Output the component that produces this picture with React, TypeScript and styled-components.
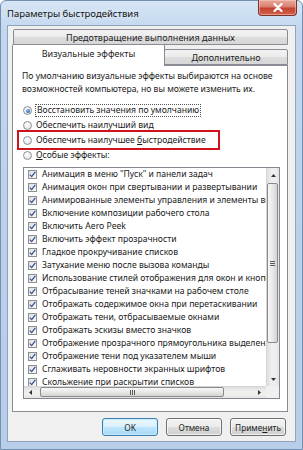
import React from "react";
import styled, { createGlobalStyle, css } from "styled-components";

const GlobalStyle = createGlobalStyle`
  html, body {
    margin: 0;
    padding: 0;
  }
  body {
    width: 303px;
    height: 450px;
    overflow: hidden;
    background: #ffffff;
    font-family: "Noto Sans", "Open Sans", sans-serif;
    font-size: 8.6px;
    color: #1a1a1a;
  }
`;

const EFFECTS = [
  "Анимация в меню \"Пуск\" и панели задач",
  "Анимация окон при свертывании и развертывании",
  "Анимированные элементы управления и элементы внутри окна",
  "Включение композиции рабочего стола",
  "Включить Aero Peek",
  "Включить эффект прозрачности",
  "Гладкое прокручивание списков",
  "Затухание меню после вызова команды",
  "Использование стилей отображения для окон и кнопок",
  "Отбрасывание теней значками на рабочем столе",
  "Отображать содержимое окна при перетаскивании",
  "Отображать тени, отбрасываемые окнами",
  "Отображать эскизы вместо значков",
  "Отображение прозрачного прямоугольника выделения",
  "Отображение тени под указателем мыши",
  "Сглаживать неровности экранных шрифтов",
  "Скольжение при раскрытии списков",
];

export default function App() {
  return (
    <>
      <GlobalStyle />
      <Window>
        <TitleBar>
          <Title>Параметры быстродействия</Title>
          <CloseButton>
            <svg width="10" height="9" viewBox="0 0 10 9">
              <path
                d="M1.5 1 L8.5 8 M8.5 1 L1.5 8"
                stroke="#ffffff"
                strokeWidth="2.2"
                strokeLinecap="round"
              />
            </svg>
          </CloseButton>
        </TitleBar>
        <Client>
          <TopTabRow>
            <Tab>Предотвращение выполнения данных</Tab>
          </TopTabRow>
          <BottomTabRow>
            <Tab $active>Визуальные эффекты</Tab>
            <Tab>Дополнительно</Tab>
          </BottomTabRow>
          <Panel>
            <Description>
              По умолчанию визуальные эффекты выбираются на основе
              <br />
              возможностей компьютера, но вы можете изменить их.
            </Description>
            <RadioGroup>
              <RadioRow>
                <Radio $checked />
                <FocusLabel>Восстановить значения по умолчанию</FocusLabel>
              </RadioRow>
              <RadioRow>
                <Radio />
                <span>Обеспечить наилучший вид</span>
              </RadioRow>
              <RadioRow $marked>
                <Radio />
                <span>
                  Обеспечить наилучшее <u>б</u>ыстродействие
                </span>
              </RadioRow>
              <RadioRow>
                <Radio />
                <span>
                  <u>О</u>собые эффекты:
                </span>
              </RadioRow>
            </RadioGroup>
            <ListBox>
              <ListBody>
                <Items>
                  {EFFECTS.map((label) => (
                    <Item key={label}>
                      <CheckBox>
                        <svg width="7" height="7" viewBox="0 0 7 7">
                          <path
                            d="M0.8 3.6 L2.7 5.6 L6.3 0.8"
                            stroke="#3a4f8c"
                            strokeWidth="1.3"
                            fill="none"
                          />
                        </svg>
                      </CheckBox>
                      <ItemText>{label}</ItemText>
                    </Item>
                  ))}
                </Items>
                <VScroll>
                  <ScrollArrow>
                    <svg width="5" height="3" viewBox="0 0 5 3">
                      <path d="M0 3 L2.5 0 L5 3 Z" fill="#333333" />
                    </svg>
                  </ScrollArrow>
                  <VTrack>
                    <VThumb>
                      <Grip $vertical />
                    </VThumb>
                  </VTrack>
                  <ScrollArrow>
                    <svg width="5" height="3" viewBox="0 0 5 3">
                      <path d="M0 0 L2.5 3 L5 0 Z" fill="#333333" />
                    </svg>
                  </ScrollArrow>
                </VScroll>
              </ListBody>
              <ListFooter>
                <HScroll>
                  <ScrollArrow $horizontal>
                    <svg width="3" height="5" viewBox="0 0 3 5">
                      <path d="M3 0 L0 2.5 L3 5 Z" fill="#333333" />
                    </svg>
                  </ScrollArrow>
                  <HTrack>
                    <HThumb>
                      <Grip />
                    </HThumb>
                  </HTrack>
                  <ScrollArrow $horizontal>
                    <svg width="3" height="5" viewBox="0 0 3 5">
                      <path d="M0 0 L3 2.5 L0 5 Z" fill="#333333" />
                    </svg>
                  </ScrollArrow>
                </HScroll>
                <Corner />
              </ListFooter>
            </ListBox>
          </Panel>
          <ButtonRow>
            <DialogButton $default>OK</DialogButton>
            <DialogButton>Отмена</DialogButton>
            <DialogButton>
              Приме<u>н</u>ить
            </DialogButton>
          </ButtonRow>
        </Client>
      </Window>
    </>
  );
}

const Window = styled.div`
  width: 303px;
  height: 450px;
  box-sizing: border-box;
  display: flex;
  flex-direction: column;
  padding: 0 6px 7px 6px;
  border: 1px solid #7390b3;
  border-radius: 6px 6px 0 0;
  background: linear-gradient(
    180deg,
    #d6e5f5 0%,
    #c3d8ef 6%,
    #bcd2eb 40%,
    #b7cde8 100%
  );
`;

const TitleBar = styled.div`
  height: 24px;
  flex: none;
  display: flex;
  align-items: flex-start;
  justify-content: space-between;
`;

const Title = styled.div`
  padding-top: 6px;
  font-size: 9.5px;
  line-height: 13px;
  color: #111111;
  text-shadow: 0 0 6px rgba(255, 255, 255, 0.9);
`;

const CloseButton = styled.div`
  width: 39px;
  height: 16px;
  margin-top: -1px;
  margin-right: -1px;
  display: flex;
  align-items: center;
  justify-content: center;
  box-sizing: border-box;
  border: 1px solid #7b3328;
  border-top: none;
  border-radius: 0 0 4px 4px;
  background: linear-gradient(180deg, #e9a99c 0%, #d97f6f 45%, #c4412e 55%, #d0624c 100%);
  box-shadow: inset 0 0 0 1px rgba(255, 210, 200, 0.5);
`;

const Client = styled.div`
  flex: 1;
  min-height: 0;
  display: flex;
  flex-direction: column;
  padding: 3px 7px 0 4px;
  background: #f0f0f0;
  border: 1px solid #8fa3bd;
`;

const TopTabRow = styled.div`
  display: flex;
  flex: none;
  padding-left: 1px;
`;

const BottomTabRow = styled.div`
  display: flex;
  flex: none;
  align-items: flex-end;
  height: 22px;
  margin-top: -2px;
  margin-bottom: -1px;
  position: relative;
  z-index: 2;
`;

const Tab = styled.div<{ $active?: boolean }>`
  flex: 1;
  height: 16px;
  box-sizing: border-box;
  display: flex;
  align-items: center;
  justify-content: center;
  border: 1px solid #898c95;
  border-radius: 2px 2px 0 0;
  background: linear-gradient(180deg, #f3f3f3 0%, #ebebeb 50%, #dddddd 51%, #d6d6d6 100%);
  color: #1e1e1e;
  font-size: 9px;
  white-space: nowrap;

  ${({ $active }) =>
    $active
      ? css`
          flex: none;
          width: 153px;
          height: 22px;
          padding-bottom: 4px;
          border-bottom: none;
          background: #ffffff;
        `
      : css`
          margin-bottom: 1px;
        `}

  & + & {
    margin-left: -1px;
  }
`;

const Panel = styled.div`
  position: relative;
  z-index: 1;
  flex: none;
  display: flex;
  flex-direction: column;
  padding: 4px 7px 12px 9px;
  background: #ffffff;
  border: 1px solid #898c95;
`;

const Description = styled.div`
  line-height: 13px;
  white-space: nowrap;
`;

const RadioGroup = styled.div`
  display: flex;
  flex-direction: column;
  align-items: flex-start;
  margin-top: 7px;
  padding-left: 1px;
`;

const RadioRow = styled.label<{ $marked?: boolean }>`
  position: relative;
  display: inline-flex;
  align-items: center;
  gap: 4px;
  height: 15px;
  line-height: 11px;
  white-space: nowrap;

  ${({ $marked }) =>
    $marked &&
    css`
      &::after {
        content: "";
        position: absolute;
        left: -6px;
        right: -14px;
        top: -3px;
        bottom: -2px;
        border: 2px solid #d0121b;
      }
    `}
`;

const Radio = styled.span<{ $checked?: boolean }>`
  width: 9px;
  height: 9px;
  box-sizing: border-box;
  border-radius: 50%;
  border: 1px solid #8c8f94;
  background: radial-gradient(circle at 40% 35%, #ffffff 0%, #e9ecef 60%, #d4d8de 100%);
  display: flex;
  align-items: center;
  justify-content: center;

  ${({ $checked }) =>
    $checked &&
    css`
      &::before {
        content: "";
        width: 4px;
        height: 4px;
        border-radius: 50%;
        background: radial-gradient(circle at 40% 35%, #8fc2f0 0%, #2a64b6 70%, #1c4a8e 100%);
      }
    `}
`;

const FocusLabel = styled.span`
  outline: 1px dotted #555555;
  outline-offset: 0;
  padding: 0 1px;
  line-height: 11px;
`;

const ListBox = styled.div`
  margin: 4px 0 0 1px;
  display: flex;
  flex-direction: column;
  border: 1px solid #828790;
  background: #ffffff;
`;

const ListBody = styled.div`
  flex: none;
  height: 218px;
  display: flex;
  overflow: hidden;
`;

const ListFooter = styled.div`
  flex: none;
  height: 12px;
  display: flex;
  justify-content: space-between;
`;

const Items = styled.div`
  flex: 1;
  min-width: 0;
  overflow: hidden;
  padding-left: 4px;
`;

const Item = styled.div`
  display: flex;
  align-items: center;
  gap: 5px;
  height: 13px;
  line-height: 13px;
  white-space: nowrap;
`;

const CheckBox = styled.span`
  flex: none;
  width: 9px;
  height: 9px;
  box-sizing: border-box;
  border: 1px solid #8e8f8f;
  background: linear-gradient(135deg, #d9dee6 0%, #eef0f3 60%, #f7f7f7 100%);
  display: flex;
  align-items: center;
  justify-content: center;
`;

const ItemText = styled.span`
  color: #202020;
`;

const VScroll = styled.div`
  flex: none;
  width: 13px;
  box-sizing: border-box;
  display: flex;
  flex-direction: column;
  background: linear-gradient(90deg, #dedede 0%, #eeeeee 35%, #eeeeee 70%, #e2e2e2 100%);
  border-left: 1px solid #d6d6d6;
`;

const HScroll = styled.div`
  flex: none;
  width: 242px;
  box-sizing: border-box;
  display: flex;
  background: linear-gradient(180deg, #dedede 0%, #eeeeee 35%, #eeeeee 70%, #e2e2e2 100%);
  border-top: 1px solid #d6d6d6;
`;

const Corner = styled.div`
  flex: none;
  width: 13px;
  background: #f0f0f0;
`;

const ScrollArrow = styled.div<{ $horizontal?: boolean }>`
  flex: none;
  display: flex;
  align-items: center;
  justify-content: center;
  ${({ $horizontal }) =>
    $horizontal
      ? css`
          width: 13px;
        `
      : css`
          height: 14px;
        `}
`;

const VTrack = styled.div`
  flex: 1;
  min-height: 0;
  display: flex;
  flex-direction: column;
  padding: 1px 1px 0 0;
`;

const HTrack = styled.div`
  flex: 1;
  display: flex;
  padding: 0 29px 1px 3px;
`;

const thumbLook = css`
  box-sizing: border-box;
  border: 1px solid #8a8a8a;
  border-radius: 2px;
  display: flex;
  align-items: center;
  justify-content: center;
`;

const VThumb = styled.div`
  ${thumbLook};
  height: 160px;
  background: linear-gradient(90deg, #f7f7f7 0%, #e8e8e8 50%, #d2d2d2 100%);
`;

const HThumb = styled.div`
  ${thumbLook};
  flex: 1;
  background: linear-gradient(180deg, #f7f7f7 0%, #e8e8e8 50%, #d2d2d2 100%);
`;

const Grip = styled.span<{ $vertical?: boolean }>`
  width: 5px;
  height: 5px;
  background: ${({ $vertical }) =>
    $vertical
      ? "repeating-linear-gradient(180deg, #5a5a5a 0 1px, transparent 1px 2px)"
      : "repeating-linear-gradient(90deg, #5a5a5a 0 1px, transparent 1px 2px)"};
`;

const ButtonRow = styled.div`
  display: flex;
  flex: none;
  justify-content: flex-end;
  gap: 8px;
  margin-top: 6px;
  padding-right: 2px;
`;

const DialogButton = styled.div<{ $default?: boolean }>`
  width: 56px;
  height: 18px;
  box-sizing: border-box;
  display: flex;
  align-items: center;
  justify-content: center;
  border: 1px solid #707070;
  border-radius: 3px;
  color: #1e1e1e;
  font-size: 8.3px;
  background: linear-gradient(180deg, #f2f2f2 0%, #ebebeb 50%, #dddddd 51%, #cfcfcf 100%);
  box-shadow: inset 0 0 0 1px rgba(255, 255, 255, 0.7);

  ${({ $default }) =>
    $default &&
    css`
      border-color: #3c7fb1;
      background: linear-gradient(180deg, #eaf6fd 0%, #d9f0fc 50%, #bee6fd 51%, #a7d9f5 100%);
      box-shadow: inset 0 0 0 1px rgba(200, 235, 255, 0.9);
    `}
`;
